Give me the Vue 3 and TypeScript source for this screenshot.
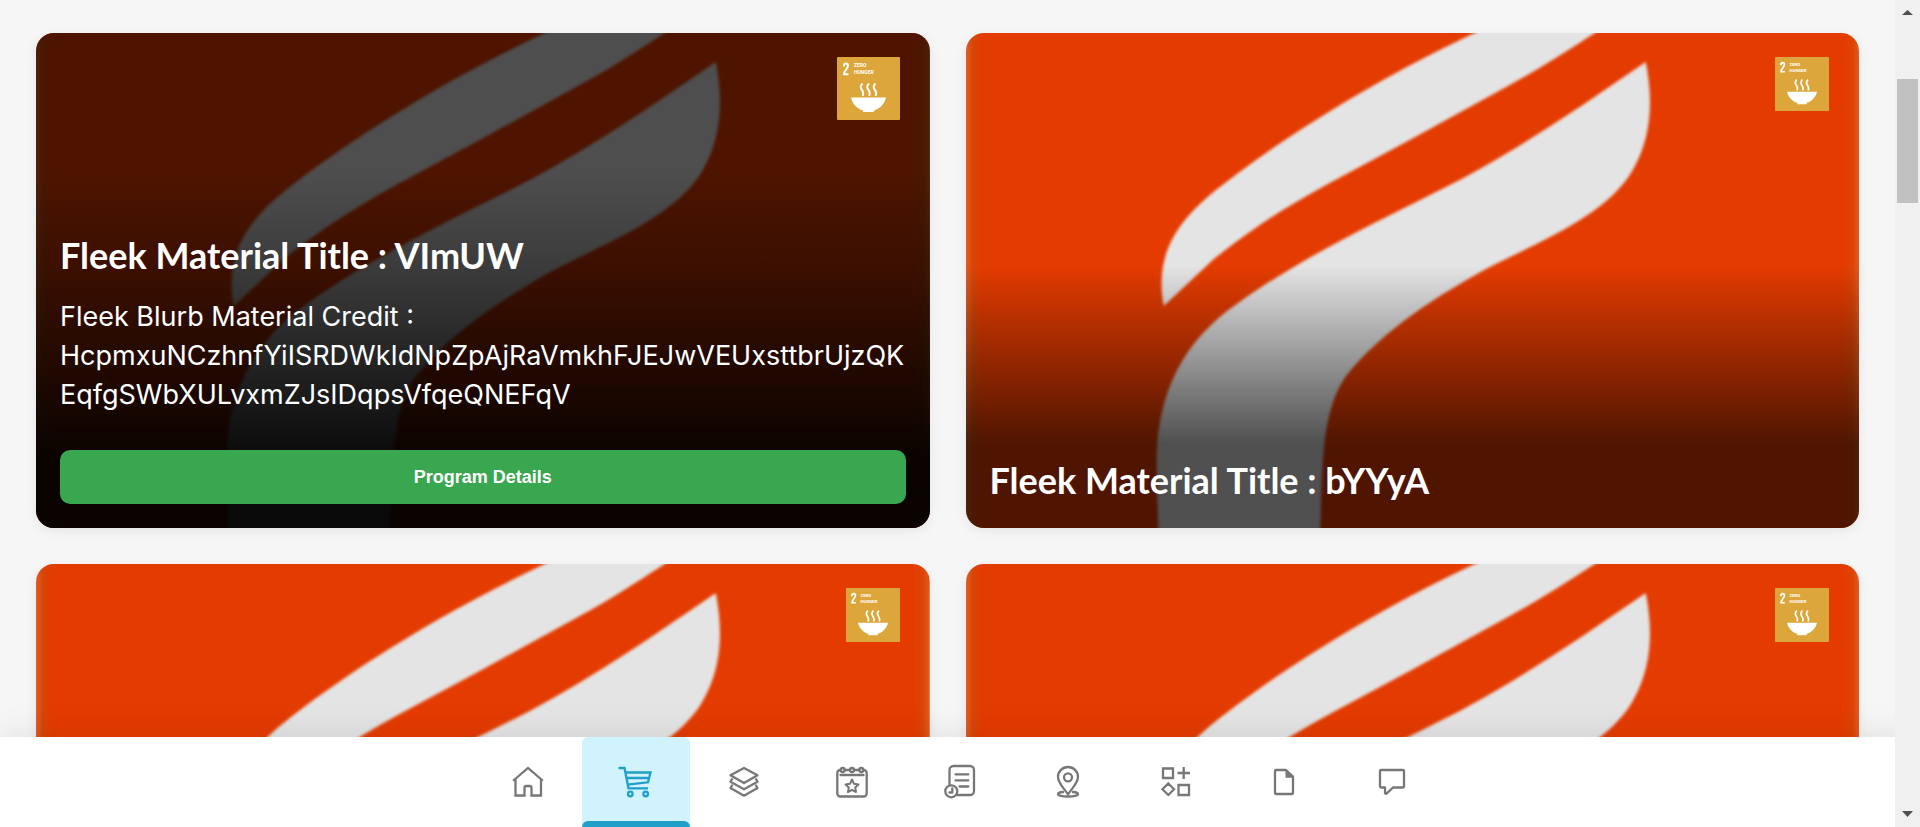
<script setup lang="ts">
interface Program {
  id: number
  title?: string
  blurb?: string
  open?: boolean
}

interface NavItem {
  name: string
  active?: boolean
}

const programs: Program[] = [
  {
    id: 1,
    title: 'Fleek Material Title : VImUW',
    blurb:
      'Fleek Blurb Material Credit : HcpmxuNCzhnfYiISRDWkIdNpZpAjRaVmkhFJEJwVEUxsttbrUjzQKEqfgSWbXULvxmZJsIDqpsVfqeQNEFqV',
    open: true,
  },
  { id: 2, title: 'Fleek Material Title : bYYyA' },
  { id: 3 },
  { id: 4 },
]

const navItems: NavItem[] = [
  { name: 'home' },
  { name: 'cart', active: true },
  { name: 'layers' },
  { name: 'calendar' },
  { name: 'history' },
  { name: 'location' },
  { name: 'apps' },
  { name: 'document' },
  { name: 'chat' },
]
</script>

<template>
  <div class="page">
    <main class="grid">
      <article v-for="p in programs" :key="p.id" class="card" :class="{ open: p.open, titled: p.title && !p.open }">
        <svg class="cover" viewBox="0 0 894 495" preserveAspectRatio="xMidYMin slice" aria-hidden="true">
          <defs>
            <linearGradient :id="'edge' + p.id" x1="0" x2="1" y1="0" y2="0">
              <stop offset="0" stop-color="#e25c24" />
              <stop offset="0.004" stop-color="#dd5218" />
              <stop offset="0.008" stop-color="#d64607" />
              <stop offset="0.018" stop-color="#e43b00" />
              <stop offset="0.982" stop-color="#e43b00" />
              <stop offset="0.992" stop-color="#dc4506" />
              <stop offset="1" stop-color="#e25c24" />
            </linearGradient>
            <filter :id="'soft' + p.id"><feGaussianBlur stdDeviation="1.5" /></filter>
          </defs>
          <rect width="894" height="495" :fill="`url(#edge${p.id})`" />
          <g fill="#e4e4e4" :filter="`url(#soft${p.id})`">
            <path d="M198 273C188 220 213 186 254 154C300 118 388 57 511 -1L530 -12H646L629 0C600 19 572 37 544 52L444 107L364 150C340 163 318 176 297 190C279 202 262 215 247 227Z" />
            <path d="M680 29C687 65 687 102 667 137C643 180 580 206 524 234C476 260 418 296 381 342C355 378 357 430 354 510H193L191 442C188 365 215 310 271 271C340 221 430 180 494 147C560 112 620 70 680 29Z" />
          </g>
        </svg>
        <div class="shade"></div>
        <svg class="badge" viewBox="0 0 63 63" role="img" aria-label="Zero hunger">
          <rect width="63" height="63" rx="1" fill="#dda63a" />
          <path d="M7 9.500V8.500a2 2 0 0 1 4 0c0 3.500-4 5-4 8.700H11.500" fill="none" stroke="#fff" stroke-width="2" />
          <g class="badge-text">
            <text x="17" y="10">ZERO</text>
            <text x="17" y="17">HUNGER</text>
          </g>
          <path d="M14 40.500H49C48 46 43 52 37 53.500V55H26V53.500C20 52 15 46 14 40.500Z" fill="#fff" />
          <path d="M25.500 26.500c-2.500 2.500-2.500 4-.6 6.400s1.700 3.600.8 6M32 26.500c-2.500 2.500-2.500 4-.6 6.400s1.700 3.600.8 6M38.500 26.500c-2.500 2.500-2.500 4-.6 6.400s1.700 3.600.8 6" fill="none" stroke="#fff" stroke-width="2" />
        </svg>
        <div v-if="p.title" class="content">
          <h2>{{ p.title }}</h2>
          <template v-if="p.open">
            <p>{{ p.blurb }}</p>
            <button type="button" class="details">Program Details</button>
          </template>
        </div>
      </article>
    </main>

    <nav class="bottom-nav">
      <a v-for="item in navItems" :key="item.name" href="#" :class="{ active: item.active }" :aria-label="item.name">
        <svg viewBox="0 0 36 36" fill="none" stroke="currentColor" stroke-width="2.3" stroke-linejoin="round" stroke-linecap="round" aria-hidden="true">
          <path v-if="item.name === 'home'" stroke-linecap="square" stroke-linejoin="miter" d="M4 16 18 4 32 16M5.500 16V31.500H14.500V24a2 2 0 0 1 2-2h3a2 2 0 0 1 2 2v7.500H31V16" />
          <g v-else-if="item.name === 'cart'">
            <path stroke-linecap="butt" stroke-linejoin="miter" d="M.5 4H6.500L10.500 24.300H30M7.500 8.500H32.500L30 18.300 9.500 20.700M8.500 14H31.500" />
            <circle cx="12.300" cy="30" r="2.300" /><circle cx="27.700" cy="30" r="2.300" />
          </g>
          <path v-else-if="item.name === 'layers'" d="M18 4 31.500 11.200 18 19 4.500 11.200ZM6 15.200 4.500 17.700 18 25.300 31.500 17.700 30 15.200M6 21.500 4.500 24 18 31.700 31.500 24 30 21.500" />
          <g v-else-if="item.name === 'calendar'">
            <path d="M6.700 6H6.300a3 3 0 0 0-3 3V29.500a3 3 0 0 0 3 3H29.700a3 3 0 0 0 3-3V9a3 3 0 0 0-3-3h-.4M10.700 6H16M20 6h5.300M6.500 11H29.500" />
            <circle cx="8.700" cy="6" r="2" /><circle cx="18" cy="6" r="2" /><circle cx="27.300" cy="6" r="2" />
            <path stroke-width="2" d="M18 15.500 20 19.800 24.500 20.400 21.200 23.500 22 28 18 25.800 14 28 14.800 23.500 11.500 20.400 16 19.800Z" />
          </g>
          <g v-else-if="item.name === 'history'">
            <path d="M7.500 21V6a4 4 0 0 1 4-4H28a4 4 0 0 1 4 4V27a4 4 0 0 1-4 4H15.500M13.500 10.300H26.300M13.500 16.300H26.300M17.500 22.500H26.300M10.300 24.500V28.500H7.500" />
            <circle cx="9.300" cy="27.300" r="6" />
          </g>
          <g v-else-if="item.name === 'location'">
            <path d="M18 30.500C14.500 25 8 19 8 13a10 10 0 0 1 20 0C28 19 21.500 25 18 30.500Z" />
            <circle cx="18" cy="13.300" r="4" />
            <path d="M13 28C10 28.200 8 29 8 30.200S12 32.500 18 32.500 28 31.500 28 30.200 26 28.200 23 28" />
          </g>
          <path v-else-if="item.name === 'apps'" stroke-linecap="butt" stroke-linejoin="miter" d="M5 4.500H15V14H5ZM25.700 3V15M19.500 9H32M10.300 19.500 16 25.300 10.300 31 4.500 25.300ZM20.500 21H31V31H20.500Z" />
          <g v-else-if="item.name === 'document'">
            <path d="M10 6H20L27 12.500V28.500a1.500 1.500 0 0 1-1.500 1.500H10.500A1.500 1.500 0 0 1 9 28.500V7a1 1 0 0 1 1-1Z" />
            <path fill="currentColor" stroke="none" d="M19.500 5.500V13.700H27.800Z" />
          </g>
          <path v-else d="M7 6H29A1 1 0 0 1 30 7V22A1.500 1.500 0 0 1 28.500 23.500H19L12.500 29.700Q11 30.300 11 28.500V23.500H7.500A1.500 1.500 0 0 1 6 22V7A1 1 0 0 1 7 6Z" />
        </svg>
      </a>
    </nav>

    <div class="scrollbar" aria-hidden="true">
      <svg viewBox="0 0 25 27"><path d="M7 15 12.500 10 18 15Z" fill="#505050" /></svg>
      <div class="track"><div class="thumb"></div></div>
      <svg viewBox="0 0 25 27"><path d="M7 11 12.500 17 18 11Z" fill="#505050" /></svg>
    </div>
  </div>
</template>

<style>
body {
  margin: 0;
  background: #f6f6f6;
}
</style>

<style scoped>
.page {
  height: 100vh;
  overflow: hidden;
  background: #f6f6f6;
  padding-right: 25px;
  box-sizing: border-box;
}
.grid {
  display: grid;
  grid-template-columns: repeat(2, minmax(0, 1fr));
  gap: 36px;
  padding: 33px 36px 36px;
}
.card {
  position: relative;
  display: flex;
  flex-direction: column;
  justify-content: flex-end;
  min-height: 495px;
  border-radius: 18px;
  overflow: hidden;
  box-shadow: 0 3px 12px rgba(0, 0, 0, 0.07);
}
.cover,
.shade {
  position: absolute;
  inset: 0;
  width: 100%;
  height: 100%;
}
.titled .shade {
  background: linear-gradient(transparent 47%, rgba(0, 0, 0, 0.65) 83%);
}
.open .shade {
  background:
    linear-gradient(transparent 28%, rgba(0, 0, 0, 0.25) 48%, rgba(0, 0, 0, 0.87) 86%),
    rgba(0, 0, 0, 0.66);
}
.badge {
  position: absolute;
  top: 24px;
  right: 30px;
  width: 54px;
}
.open .badge {
  width: 63px;
}
.badge-text {
  font: 700 5px Roboto, "Liberation Sans", sans-serif;
  fill: #fff;
}
.content {
  position: relative;
  padding: 24px;
  color: #fff;
}
h2 {
  margin: 0;
  padding-bottom: 3px;
  font: 700 36px/42px Lato, "Open Sans", sans-serif;
}
p {
  margin: 18px 0 36px;
  font: 400 27px/39px Inter, sans-serif;
  overflow-wrap: anywhere;
}
.details {
  display: block;
  width: 100%;
  height: 54px;
  border: 0;
  border-radius: 10px;
  background: #39a650;
  color: #fff;
  font: bold 18px "Liberation Sans", Arial, sans-serif;
}
.bottom-nav {
  position: fixed;
  left: 0;
  right: 0;
  bottom: 0;
  display: flex;
  justify-content: center;
  height: 90px;
  background: #fff;
  box-shadow: 0 0 36px rgba(0, 0, 0, 0.1);
}
.bottom-nav a {
  position: relative;
  display: flex;
  align-items: center;
  justify-content: center;
  width: 108px;
  color: #777;
}
.bottom-nav svg {
  width: 36px;
  height: 36px;
}
.bottom-nav .active {
  color: #1f9fca;
  background: #d1f3fe;
  border-radius: 6px 6px 0 0;
}
.bottom-nav .active::after {
  content: "";
  position: absolute;
  inset: auto 0 0;
  height: 6px;
  background: #1f9fca;
  border-radius: 6px 6px 0 0;
}
.scrollbar {
  position: fixed;
  top: 0;
  right: 0;
  bottom: 0;
  display: flex;
  flex-direction: column;
  width: 25px;
  background: #f0f0f0;
}
.scrollbar svg {
  display: block;
}
.track {
  flex: 1;
  padding: 52px 2px 0;
}
.thumb {
  height: 124px;
  background: #c1c1c1;
}
</style>
